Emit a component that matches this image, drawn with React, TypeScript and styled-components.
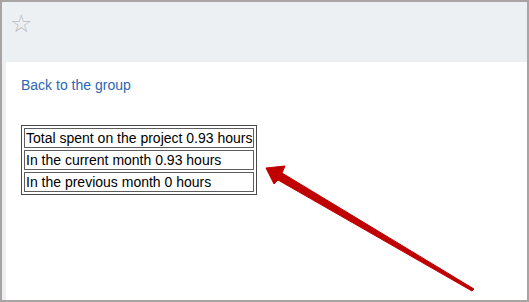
import React from "react";
import styled, { createGlobalStyle } from "styled-components";

const Global = createGlobalStyle`
  html, body { margin: 0; padding: 0; background: #ffffff; }
  body { font-family: Arial, "Liberation Sans", sans-serif; }
`;

const Frame = styled.div`
  position: relative;
  width: 529px;
  height: 302px;
  box-sizing: border-box;
  border: 2px solid #a8a4a4;
  background: #edf0f3;
  display: flex;
  flex-direction: column;
  overflow: hidden;
`;

const Header = styled.div`
  height: 60px;
  flex: none;
  display: flex;
  align-items: flex-start;
  padding: 9px 0 0 8px;
  box-sizing: border-box;
`;

const Star = styled.span`
  font-family: "DejaVu Sans", sans-serif;
  font-size: 25px;
  line-height: 26px;
  color: #b9bdc2;
`;

const Body = styled.div`
  flex: 1;
  display: flex;
  padding-left: 4px;
`;

const Panel = styled.div`
  flex: 1;
  background: #ffffff;
  padding: 15px 15px 0 15px;
  display: flex;
  flex-direction: column;
  align-items: flex-start;
`;

const BackLink = styled.a`
  font-size: 14px;
  line-height: 16px;
  color: #2b67b1;
  text-decoration: none;
  cursor: pointer;
`;

const StatsTable = styled.table`
  margin-top: 32px;
  border: 1px solid #4a4a4a;
  border-spacing: 2px;
  border-collapse: separate;
`;

const Cell = styled.td`
  border: 1px solid #5e5e5e;
  padding: 1px;
  font-size: 14px;
  line-height: 16px;
  color: #000000;
  white-space: nowrap;
`;

const ArrowSvg = styled.svg`
  position: absolute;
  left: 0;
  top: 0;
  pointer-events: none;
`;

const rows = [
  "Total spent on the project 0.93 hours",
  "In the current month 0.93 hours",
  "In the previous month 0 hours",
];

export default function App() {
  return (
    <>
      <Global />
      <Frame>
        <Header>
          <Star>☆</Star>
        </Header>
        <Body>
          <Panel>
            <BackLink>Back to the group</BackLink>
            <StatsTable>
              <tbody>
                {rows.map((r) => (
                  <tr key={r}>
                    <Cell>{r}</Cell>
                  </tr>
                ))}
              </tbody>
            </StatsTable>
          </Panel>
        </Body>
        <ArrowSvg width="529" height="302" viewBox="0 0 529 302">
          <polygon
            points="266,168 285,166 282,173 474,289 472,291 278,180 274,184"
            fill="#c00000"
            stroke="#c00000"
            strokeWidth="1"
            strokeLinejoin="round"
            transform="translate(-2,-2)"
          />
        </ArrowSvg>
      </Frame>
    </>
  );
}
